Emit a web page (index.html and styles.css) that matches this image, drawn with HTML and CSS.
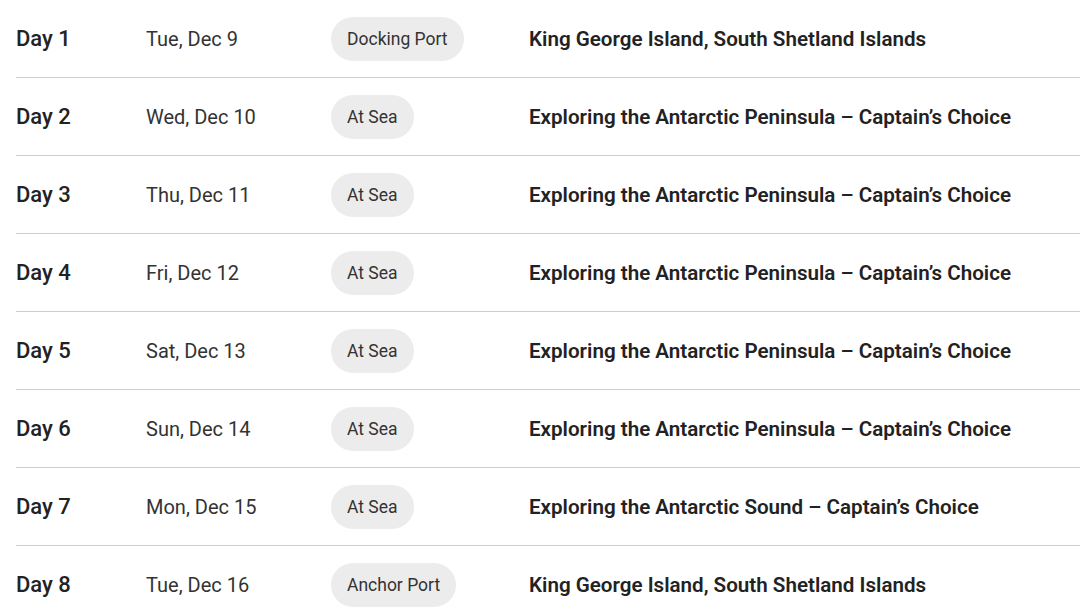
FILE: index.html
```html
<!DOCTYPE html>
<html lang="en">
<head>
<meta charset="utf-8">
<title>Itinerary</title>
<link rel="stylesheet" href="styles.css">
</head>
<body>
<div class="itinerary">
  <div class="row"><div class="day">Day 1</div><div class="date">Tue, Dec 9</div><div class="type"><span class="pill">Docking Port</span></div><div class="place">King George Island, South Shetland Islands</div></div>
  <div class="row"><div class="day">Day 2</div><div class="date">Wed, Dec 10</div><div class="type"><span class="pill">At Sea</span></div><div class="place">Exploring the Antarctic Peninsula – Captain’s Choice</div></div>
  <div class="row"><div class="day">Day 3</div><div class="date">Thu, Dec 11</div><div class="type"><span class="pill">At Sea</span></div><div class="place">Exploring the Antarctic Peninsula – Captain’s Choice</div></div>
  <div class="row"><div class="day">Day 4</div><div class="date">Fri, Dec 12</div><div class="type"><span class="pill">At Sea</span></div><div class="place">Exploring the Antarctic Peninsula – Captain’s Choice</div></div>
  <div class="row"><div class="day">Day 5</div><div class="date">Sat, Dec 13</div><div class="type"><span class="pill">At Sea</span></div><div class="place">Exploring the Antarctic Peninsula – Captain’s Choice</div></div>
  <div class="row"><div class="day">Day 6</div><div class="date">Sun, Dec 14</div><div class="type"><span class="pill">At Sea</span></div><div class="place">Exploring the Antarctic Peninsula – Captain’s Choice</div></div>
  <div class="row"><div class="day">Day 7</div><div class="date">Mon, Dec 15</div><div class="type"><span class="pill">At Sea</span></div><div class="place">Exploring the Antarctic Sound – Captain’s Choice</div></div>
  <div class="row"><div class="day">Day 8</div><div class="date">Tue, Dec 16</div><div class="type"><span class="pill">Anchor Port</span></div><div class="place">King George Island, South Shetland Islands</div></div>
</div>
</body>
</html>
```

FILE: styles.css
```css
html, body {
  margin: 0;
  padding: 0;
  background: #ffffff;
}
body {
  font-family: Roboto, "Liberation Sans", sans-serif;
  color: #222222;
  overflow: hidden;
}
.itinerary {
  padding-left: 16px;
}
.row {
  display: grid;
  grid-template-columns: 130px 185px 198px 1fr;
  align-items: center;
  height: 77px;
  border-bottom: 1px solid #c6d0da;
}
.day {
  font-size: 22px;
  font-weight: 500;
  color: #222222;
}
.date {
  font-size: 20px;
  color: #333333;
}
.pill {
  display: inline-flex;
  align-items: center;
  height: 44px;
  padding: 0 16px;
  border-radius: 22px;
  background: #ececec;
  font-size: 17.5px;
  color: #333333;
}
.place {
  font-size: 20.6px;
  font-weight: 600;
  color: #222222;
  white-space: nowrap;
}
```
